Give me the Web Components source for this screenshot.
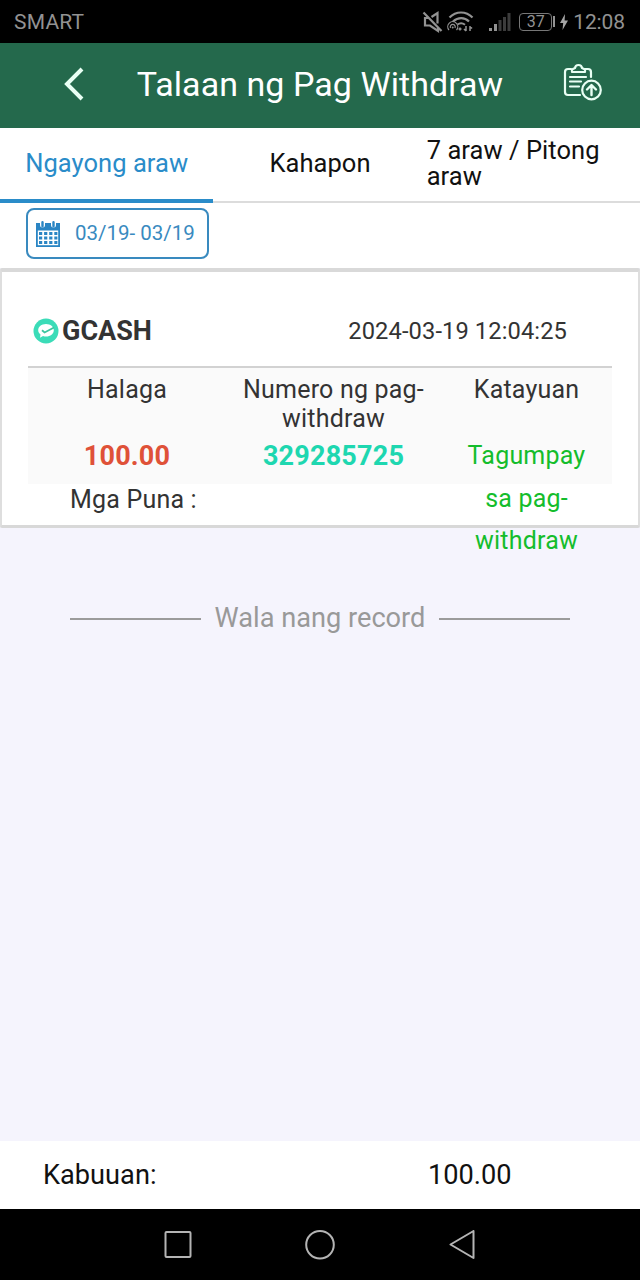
<!DOCTYPE html>
<html lang="fil">
<head>
<meta charset="utf-8">
<meta name="viewport" content="width=device-width, initial-scale=1">
<title>Talaan ng Pag Withdraw</title>
<style>
  body {
    margin: 0;
    font-family: Roboto, "Liberation Sans", sans-serif;
    background: #f5f4fd;
  }
</style>
</head>
<body>
<record-page></record-page>

<script>
class StatusBar extends HTMLElement {
  constructor() {
    super();
    this.shadowDOM = this.attachShadow({ mode: 'open' });
  }

  connectedCallback() {
    this.shadowDOM.innerHTML = `
      <style>
        :host {
          display: flex;
          align-items: center;
          justify-content: space-between;
          box-sizing: border-box;
          height: 43px;
          padding: 0 15px 0 14px;
          background: #000;
          color: #929292;
          font-size: 21px;
          line-height: 44px;
        }
        .carrier { letter-spacing: 0.2px; }
        .right { display: flex; align-items: center; }
        .time { margin-left: 5px; letter-spacing: -0.1px; }
        .battery {
          box-sizing: border-box;
          width: 33px;
          height: 18px;
          margin-left: 8px;
          border: 1.5px solid #777;
          border-radius: 4px;
          font-size: 16px;
          line-height: 16px;
          text-align: center;
        }
        .cap { width: 2px; height: 11px; margin-left: 1px; background: #929292; }
        svg { display: block; }
      </style>
      <span class="carrier"><slot name="carrier"></slot></span>
      <div class="right">
        <svg width="22" height="24" viewBox="0 0 22 24" fill="none" stroke="#929292" stroke-width="2.200">
          <path d="M7.500 8H3v7.500h5l8 5.500v-4M9.500 7l6-4v10.500M1.500 2.500l18 18.500"/>
        </svg>
        <svg width="30" height="24" viewBox="0 0 30 24" fill="none" stroke="#929292" style="margin-left:1px">
          <path d="M4.500 7.500C11 .8 21 .8 27.500 7.500" stroke-width="2.200"/>
          <path d="M8 11.500c5-4.500 11.500-4.500 16 0" stroke-width="2.200"/>
          <path d="M12.500 14.500c2.500-1.800 5-1.700 7.500.200" stroke-width="2"/>
          <path d="M4 20a5 5 0 1 1 7.500 0M5.500 18a2.500 2.500 0 1 1 4.500 0" stroke-width="1.200"/>
          <circle cx="7.700" cy="17.500" r="1" fill="#929292" stroke="none"/>
          <path d="M15 17.500v3M13.500 19h3M21 16v5M19 19l2 2M25 21v-5M27 18.500l-2-2" stroke-width="1.500"/>
        </svg>
        <svg width="22" height="24" viewBox="0 0 22 24" style="margin-left:14px">
          <path fill="#929292" d="M0 18h3v3H0zM5 14h3v7H5z"/>
          <path fill="#3c3c3c" d="M9.500 10h3v11h-3zM14 7h3v14h-3zM18.500 3h3v18h-3z"/>
        </svg>
        <div class="battery"><slot name="battery"></slot></div>
        <div class="cap"></div>
        <svg width="8" height="16" viewBox="0 0 8 16" style="margin-left:5px">
          <path fill="#a5a5a5" d="M5 0 0 9h3.200L2.500 16 8 6.500H4.600z"/>
        </svg>
        <span class="time"><slot name="time"></slot></span>
      </div>
    `;
  }
}
customElements.define('status-bar', StatusBar);

class PageHeader extends HTMLElement {
  constructor() {
    super();
    this.shadowDOM = this.attachShadow({ mode: 'open' });
  }

  connectedCallback() {
    this.shadowDOM.innerHTML = `
      <style>
        :host {
          display: grid;
          grid-template-columns: 1fr auto 1fr;
          align-items: center;
          height: 85px;
          background: #24694c;
          color: #fff;
        }
        h1 {
          margin: 0;
          font-size: 34px;
          font-weight: 400;
          line-height: 82px;
          height: 85px;
          letter-spacing: 0.05px;
          white-space: nowrap;
        }
        .back { justify-self: start; margin-left: 61px; margin-top: -3px; }
        .records { justify-self: end; margin-right: 38px; margin-top: -8px; }
        svg { display: block; fill: none; stroke: #e9fff4; }
      </style>
      <svg class="back" width="24" height="34" viewBox="0 0 24 34" stroke-width="4">
        <path d="M21 2 6 17 21 32"/>
      </svg>
      <h1><slot></slot></h1>
      <svg class="records" width="40" height="40" viewBox="0 0 40 40" stroke-width="2.200" stroke-linecap="round" stroke-linejoin="round">
        <path d="M9 7H6a3 3 0 0 0-3 3v20a3 3 0 0 0 3 3h12M23 7h3a3 3 0 0 1 3 3v5"/>
        <path d="M10 10V7.500L13 6c.5-4 6.500-4 7 0l3 1.500V10z"/>
        <path d="M8 15h16M8 19.500h11M8 24.500h9"/>
        <circle cx="29.500" cy="28" r="9.300"/>
        <path d="M29.500 33V24M25 27.500l4.500-4.500 4.500 4.500" stroke-width="2.400"/>
      </svg>
    `;
  }
}
customElements.define('page-header', PageHeader);

class TabItem extends HTMLElement {
  constructor() {
    super();
    this.shadowDOM = this.attachShadow({ mode: 'open' });
  }

  connectedCallback() {
    this.shadowDOM.innerHTML = `
      <style>
        :host {
          display: flex;
          align-items: center;
          justify-content: center;
          box-sizing: border-box;
          height: 75px;
          padding-bottom: 4px;
          border-bottom: 2px solid transparent;
          color: #111;
          font-size: 25.5px;
          line-height: 26px;
          letter-spacing: 0.05px;
          cursor: pointer;
        }
        :host([active]) {
          padding-bottom: 2px;
          border-bottom: 4px solid #2a8cc9;
          color: #2a8cc9;
        }
      </style>
      <span><slot></slot></span>
    `;
  }
}
customElements.define('tab-item', TabItem);

class TabBar extends HTMLElement {
  constructor() {
    super();
    this.shadowDOM = this.attachShadow({ mode: 'open' });
  }

  connectedCallback() {
    this.shadowDOM.innerHTML = `
      <style>
        :host {
          display: grid;
          grid-template-columns: repeat(3, 1fr);
          height: 75px;
          background: linear-gradient(#dcdcdc, #dcdcdc) 0 73px / 100% 2px no-repeat #fff;
        }
      </style>
      <slot></slot>
    `;
    this.addEventListener('click', (event) => {
      const tab = event.target.closest('tab-item');
      if (!tab) return;
      this.querySelectorAll('tab-item').forEach((item) => item.removeAttribute('active'));
      tab.setAttribute('active', '');
    });
  }
}
customElements.define('tab-bar', TabBar);

class DateRange extends HTMLElement {
  constructor() {
    super();
    this.shadowDOM = this.attachShadow({ mode: 'open' });
  }

  connectedCallback() {
    this.shadowDOM.innerHTML = `
      <style>
        :host {
          display: flex;
          box-sizing: border-box;
          height: 65px;
          padding: 5px 26px 0;
          background: #fff;
        }
        .box {
          display: flex;
          align-items: center;
          box-sizing: border-box;
          width: 183px;
          height: 51px;
          padding: 0 0 0 8px;
          border: 2px solid #398abf;
          border-radius: 8px;
          color: #398abf;
          font-size: 20.5px;
          line-height: 46px;
          white-space: nowrap;
        }
        svg { display: block; margin-right: 15px; }
        span { margin-top: -2px; }
      </style>
      <div class="box">
        <svg width="24" height="26" viewBox="0 0 24 26">
          <path fill="#2a85c4" d="M0 2h24v24H0z"/>
          <path fill="#fff" d="M1.800 9.500h20.400v14.700H1.800z"/>
          <path stroke="#fff" stroke-width="5" stroke-linecap="round" d="M6.500 0v4M17.500 0v4"/>
          <path stroke="#2a85c4" stroke-width="2.400" stroke-linecap="round" d="M6.500 1.200v4M17.500 1.200v4"/>
          <path stroke="#2a85c4" stroke-width="2.800" stroke-dasharray="3.200 1.900" d="M3 12.500h18.400M3 17h18.400M3 21.500h18.400"/>
        </svg>
        <span><slot></slot></span>
      </div>
    `;
  }
}
customElements.define('date-range', DateRange);

class RecordCard extends HTMLElement {
  constructor() {
    super();
    this.shadowDOM = this.attachShadow({ mode: 'open' });
  }

  connectedCallback() {
    this.shadowDOM.innerHTML = `
      <style>
        :host {
          display: block;
          box-sizing: border-box;
          height: 260px;
          border: 2px solid #dedede;
          border-top: 4px solid #d9d9d9;
          border-bottom: 3px solid #d8d8d8;
          border-radius: 2px;
          background: #fff;
          color: #333;
          font-size: 25px;
          padding: 0 26px;
        }
        .top {
          display: flex;
          align-items: center;
          box-sizing: border-box;
          height: 96px;
          padding: 23px 45px 0 5px;
          border-bottom: 2px solid #d2d2d2;
        }
        .top svg { display: block; margin-right: 3px; }
        .method { font-size: 27px; font-weight: 700; }
        .date { margin-left: auto; font-size: 23.7px; letter-spacing: 0.1px; }
        .table {
          display: grid;
          grid-template-columns: 198px 215px 171px;
          grid-template-rows: 60px 49px;
          padding-top: 7px;
          background: #fafafa;
          line-height: 29px;
          text-align: center;
          letter-spacing: 0.2px;
        }
        .value { line-height: 42.7px; }
        .amount { color: #df5138; font-size: 27px; font-weight: 700; }
        .number { color: #1ed7b0; font-size: 27px; font-weight: 700; }
        .status { color: #14bd2c; padding: 0 20px; }
        .remark { padding-left: 42px; line-height: 32px; letter-spacing: 0.2px; }
      </style>
      <div class="top">
        <svg width="26" height="26" viewBox="0 0 26 26">
          <circle cx="13" cy="13" r="12.500" fill="#3bdcb8"/>
          <path fill="#fff" d="M13 6c4.500 0 7.800 2.800 7.800 6.200S17.500 18.500 13 18.500c-1 0-2-.1-3-.500L7 19.800l.5-3.300c-1.500-1.200-2.300-2.600-2.300-4.300C5.200 8.800 8.500 6 13 6z"/>
          <path d="M9 12.300l2.600 2.200L21 9.500" fill="none" stroke="#3bc5a0" stroke-width="1.800"/>
        </svg>
        <span class="method"><slot name="method"></slot></span>
        <span class="date"><slot name="date"></slot></span>
      </div>
      <div class="table">
        <div>Halaga</div>
        <div>Numero ng pag-withdraw</div>
        <div>Katayuan</div>
        <div class="value amount"><slot name="amount"></slot></div>
        <div class="value number"><slot name="number"></slot></div>
        <div class="value status"><slot name="status"></slot></div>
      </div>
      <div class="remark">Mga Puna :</div>
    `;
  }
}
customElements.define('record-card', RecordCard);

class ListEnd extends HTMLElement {
  constructor() {
    super();
    this.shadowDOM = this.attachShadow({ mode: 'open' });
  }

  connectedCallback() {
    this.shadowDOM.innerHTML = `
      <style>
        :host {
          display: flex;
          align-items: center;
          justify-content: center;
          gap: 14px;
          color: #999;
          font-size: 27.2px;
          line-height: 32px;
        }
        i { width: 131px; height: 2px; margin-top: 2px; background: #9b9b9b; }
      </style>
      <i></i><span><slot></slot></span><i></i>
    `;
  }
}
customElements.define('list-end', ListEnd);

class TotalBar extends HTMLElement {
  constructor() {
    super();
    this.shadowDOM = this.attachShadow({ mode: 'open' });
  }

  connectedCallback() {
    this.shadowDOM.innerHTML = `
      <style>
        :host {
          display: grid;
          grid-template-columns: 1fr 212px;
          padding-left: 43px;
          height: 68px;
          background: #fff;
          color: #111;
          font-size: 27.2px;
          line-height: 69px;
        }
      </style>
      <span><slot name="label"></slot></span>
      <span><slot name="total"></slot></span>
    `;
  }
}
customElements.define('total-bar', TotalBar);

class NavButtons extends HTMLElement {
  constructor() {
    super();
    this.shadowDOM = this.attachShadow({ mode: 'open' });
  }

  connectedCallback() {
    this.shadowDOM.innerHTML = `
      <style>
        :host {
          display: flex;
          align-items: center;
          justify-content: center;
          gap: 112px;
          height: 71px;
          background: #000;
        }
        svg { display: block; fill: none; stroke: #b4b4b4; stroke-width: 2; stroke-linejoin: round; }
      </style>
      <svg width="30" height="30" viewBox="0 0 30 30"><rect x="2.500" y="2" width="25" height="25" rx="1"/></svg>
      <svg width="30" height="30" viewBox="0 0 30 30"><circle cx="15" cy="14.800" r="13.800"/></svg>
      <svg width="30" height="30" viewBox="0 0 30 30"><path d="M26.500 1v27L3.500 14.500z"/></svg>
    `;
  }
}
customElements.define('nav-buttons', NavButtons);

class RecordPage extends HTMLElement {
  constructor() {
    super();
    this.shadowDOM = this.attachShadow({ mode: 'open' });
  }

  connectedCallback() {
    this.shadowDOM.innerHTML = `
      <style>
        :host {
          display: flex;
          flex-direction: column;
          height: 1280px;
        }
        main { flex: 1; }
        list-end { margin-top: 74px; }
      </style>
      <status-bar>
        <span slot="carrier">SMART</span>
        <span slot="battery">37</span>
        <span slot="time">12:08</span>
      </status-bar>
      <page-header>Talaan ng Pag Withdraw</page-header>
      <tab-bar>
        <tab-item active>Ngayong araw</tab-item>
        <tab-item>Kahapon</tab-item>
        <tab-item>7 araw / Pitong araw</tab-item>
      </tab-bar>
      <date-range>03/19- 03/19</date-range>
      <main>
        <record-card>
          <span slot="method">GCASH</span>
          <span slot="date">2024-03-19 12:04:25</span>
          <span slot="amount">100.00</span>
          <span slot="number">329285725</span>
          <span slot="status">Tagumpay sa pag-withdraw</span>
        </record-card>
        <list-end>Wala nang record</list-end>
      </main>
      <total-bar>
        <span slot="label">Kabuuan:</span>
        <span slot="total">100.00</span>
      </total-bar>
      <nav-buttons></nav-buttons>
    `;
  }
}
customElements.define('record-page', RecordPage);
</script>
</body>
</html>
